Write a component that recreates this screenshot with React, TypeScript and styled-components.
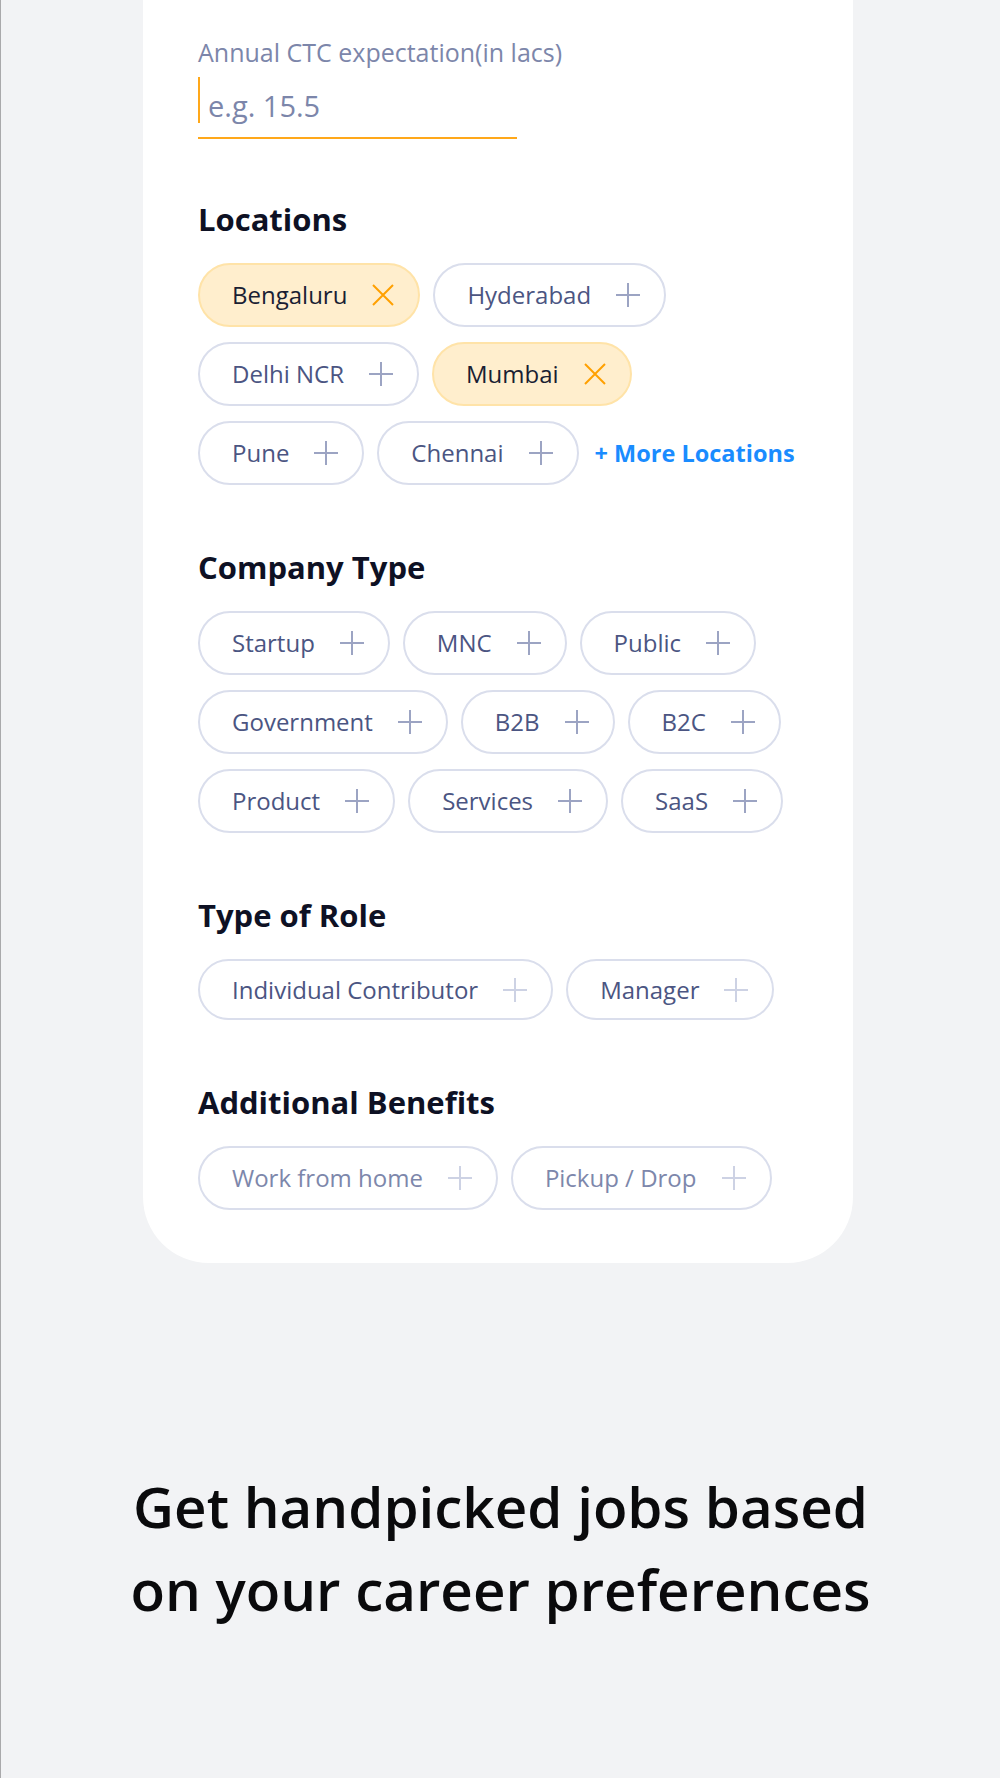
import React from "react";
import styled, { createGlobalStyle, css } from "styled-components";

const GlobalStyle = createGlobalStyle`
  html, body {
    margin: 0;
    padding: 0;
    background: #f2f3f5;
  }
  body {
    font-family: "Open Sans", "Liberation Sans", sans-serif;
    -webkit-font-smoothing: antialiased;
  }
  * { box-sizing: border-box; }
`;

const Page = styled.main`
  min-height: 1778px;
  border-left: 1px solid #a9a9ab;
  background: #f2f3f5;
  display: flex;
  flex-direction: column;
`;

const Card = styled.section`
  width: 710px;
  margin-left: 142px;
  background: #ffffff;
  border-radius: 0 0 66px 66px;
  padding: 36px 55px 53px;
  display: flex;
  flex-direction: column;
`;

const FieldLabel = styled.label`
  font-size: 25px;
  line-height: 32px;
  color: #7c86aa;
`;

const Field = styled.div`
  margin-top: 9px;
  width: 319px;
  height: 62px;
  border-bottom: 2px solid #ffa81a;
  display: flex;
  align-items: flex-start;
`;

const Caret = styled.span`
  width: 2px;
  height: 46px;
  background: #ffa81a;
  flex: none;
`;

const Placeholder = styled.span`
  margin-left: 8px;
  padding-top: 6px;
  font-size: 29px;
  line-height: 46px;
  color: #7c86aa;
`;

const Section = styled.div<{ $gap: number }>`
  margin-top: ${(p) => p.$gap}px;
  display: flex;
  flex-direction: column;
`;

const Heading = styled.h2`
  margin: 0;
  font-size: 31px;
  line-height: 40px;
  font-weight: 700;
  color: #0e1124;
`;

const ChipGroup = styled.div`
  margin-top: 24px;
  display: flex;
  flex-direction: column;
  gap: 15px;
`;

const ChipRow = styled.div`
  display: flex;
  align-items: center;
  gap: 13px;
`;

type Tone = "normal" | "soft" | "faded";

const Chip = styled.button<{ $selected?: boolean; $tone: Tone; $short?: boolean }>`
  height: ${(p) => (p.$short ? 61 : 64)}px;
  padding: 0 24px 0 32px;
  border-radius: 32px;
  border: 2px solid #dadeec;
  background: #ffffff;
  display: inline-flex;
  align-items: center;
  gap: 25px;
  font-family: inherit;
  font-size: 24px;
  line-height: 30px;
  cursor: pointer;
  color: ${(p) => (p.$tone === "faded" ? "#7d87ab" : "#4b5582")};
  ${(p) =>
    p.$selected &&
    css`
      background: #ffeecd;
      border-color: #ffe3a8;
      color: #1a1e33;
    `}
`;

const IconBox = styled.span<{ $tone: Tone; $selected?: boolean }>`
  display: inline-flex;
  color: ${(p) =>
    p.$selected ? "#ffa000" : p.$tone === "normal" ? "#9ca4c3" : "#cdd2e4"};
`;

const MoreLink = styled.a`
  margin-left: 3px;
  font-size: 23.5px;
  font-weight: 700;
  color: #1a8cff;
  text-decoration: none;
  cursor: pointer;
`;

const Tagline = styled.h1`
  margin: 202px 0 0;
  text-align: center;
  font-size: 56.5px;
  line-height: 83px;
  font-weight: 600;
  color: #0a0a0c;
`;

const PlusIcon = () => (
  <svg width="24" height="24" viewBox="0 0 24 24" aria-hidden="true">
    <path d="M12 0v24M0 12h24" stroke="currentColor" strokeWidth="2" fill="none" />
  </svg>
);

const CrossIcon = () => (
  <svg width="22" height="22" viewBox="0 0 22 22" aria-hidden="true">
    <path d="M1 1l20 20M21 1L1 21" stroke="currentColor" strokeWidth="2" fill="none" />
  </svg>
);

type ChipData = { label: string; selected?: boolean };

const ChipItem: React.FC<ChipData & { tone: Tone; short?: boolean }> = ({
  label,
  selected,
  tone,
  short,
}) => (
  <Chip $selected={selected} $tone={tone} $short={short} type="button">
    <span>{label}</span>
    <IconBox $tone={tone} $selected={selected}>
      {selected ? <CrossIcon /> : <PlusIcon />}
    </IconBox>
  </Chip>
);

type SectionData = {
  title: string;
  tone: Tone;
  gap: number;
  short?: boolean;
  rows: ChipData[][];
  more?: string;
};

const sections: SectionData[] = [
  {
    title: "Locations",
    tone: "normal",
    gap: 60,
    rows: [
      [{ label: "Bengaluru", selected: true }, { label: "Hyderabad" }],
      [{ label: "Delhi NCR" }, { label: "Mumbai", selected: true }],
      [{ label: "Pune" }, { label: "Chennai" }],
    ],
    more: "+ More Locations",
  },
  {
    title: "Company Type",
    tone: "normal",
    gap: 62,
    rows: [
      [{ label: "Startup" }, { label: "MNC" }, { label: "Public" }],
      [{ label: "Government" }, { label: "B2B" }, { label: "B2C" }],
      [{ label: "Product" }, { label: "Services" }, { label: "SaaS" }],
    ],
  },
  {
    title: "Type of Role",
    tone: "soft",
    gap: 62,
    short: true,
    rows: [[{ label: "Individual Contributor" }, { label: "Manager" }]],
  },
  {
    title: "Additional Benefits",
    tone: "faded",
    gap: 62,
    rows: [[{ label: "Work from home" }, { label: "Pickup / Drop" }]],
  },
];

export default function App() {
  return (
    <>
      <GlobalStyle />
      <Page>
        <Card>
          <FieldLabel>Annual CTC expectation(in lacs)</FieldLabel>
          <Field>
            <Caret />
            <Placeholder>e.g. 15.5</Placeholder>
          </Field>
          {sections.map((s) => (
            <Section key={s.title} $gap={s.gap}>
              <Heading>{s.title}</Heading>
              <ChipGroup>
                {s.rows.map((row, i) => (
                  <ChipRow key={i}>
                    {row.map((c) => (
                      <ChipItem key={c.label} {...c} tone={s.tone} short={s.short} />
                    ))}
                    {s.more && i === s.rows.length - 1 && <MoreLink>{s.more}</MoreLink>}
                  </ChipRow>
                ))}
              </ChipGroup>
            </Section>
          ))}
        </Card>
        <Tagline>
          Get handpicked jobs based
          <br />
          on your career preferences
        </Tagline>
      </Page>
    </>
  );
}
